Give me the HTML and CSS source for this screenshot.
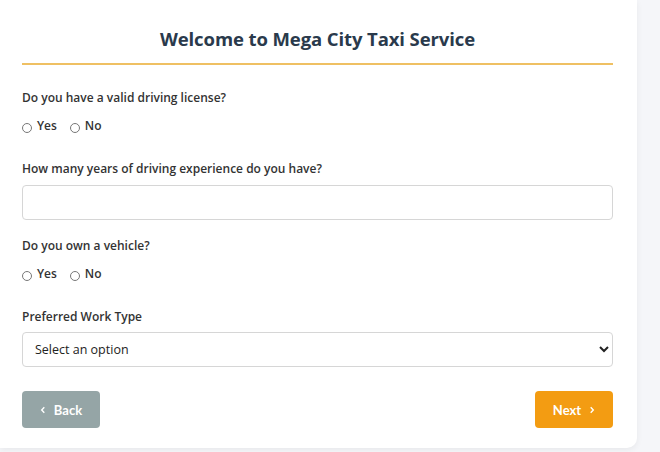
FILE: index.html
```html
<!DOCTYPE html>
<html lang="en">
<head>
<meta charset="utf-8">
<title>Mega City Taxi Service</title>
<link rel="stylesheet" href="styles.css">
</head>
<body>
<div class="card">
  <h1 class="title">Welcome to Mega City Taxi Service</h1>
  <form class="form">
    <div class="group group-radio">
      <p class="label">Do you have a valid driving license?</p>
      <div class="radios">
        <label class="opt"><input type="radio" name="license"> Yes</label>
        <label class="opt"><input type="radio" name="license"> No</label>
      </div>
    </div>
    <div class="group group-field">
      <label class="label" for="exp">How many years of driving experience do you have?</label>
      <input class="field" id="exp" type="text">
    </div>
    <div class="group group-radio">
      <p class="label">Do you own a vehicle?</p>
      <div class="radios">
        <label class="opt"><input type="radio" name="vehicle"> Yes</label>
        <label class="opt"><input type="radio" name="vehicle"> No</label>
      </div>
    </div>
    <div class="group group-select">
      <label class="label" for="work">Preferred Work Type</label>
      <select class="field select" id="work">
        <option>Select an option</option>
      </select>
    </div>
    <div class="actions">
      <button type="button" class="btn btn-back">
        <svg class="chev" width="6" height="8" viewBox="0 0 6 8"><path d="M4.3 1.2 L1.7 4 L4.3 6.8" fill="none" stroke="#fff" stroke-width="1.4"/></svg>
        <span>Back</span>
      </button>
      <button type="button" class="btn btn-next">
        <span>Next</span>
        <svg class="chev" width="6" height="8" viewBox="0 0 6 8"><path d="M1.7 1.2 L4.3 4 L1.7 6.8" fill="none" stroke="#fff" stroke-width="1.4"/></svg>
      </button>
    </div>
  </form>
</div>
</body>
</html>
```
FILE: styles.css
```css
* { box-sizing: border-box; }
html, body { margin: 0; padding: 0; }
body {
  background: #f5f6f9;
  font-family: "Open Sans", "Noto Sans", sans-serif;
  height: 452px;
  overflow: hidden;
}
.card {
  width: 637px;
  background: #fff;
  border-radius: 0 0 10px 0;
  box-shadow: 0 2px 6px rgba(0,0,0,0.06);
  padding: 26px 24px 20px 22px;
}
.title {
  margin: 0;
  text-align: center;
  font-size: 18.5px;
  line-height: 26px;
  font-weight: 700;
  color: #2a3a4c;
  padding-bottom: 11px;
  border-bottom: 2px solid #efc063;
  letter-spacing: -0.1px;
}
.form { padding-top: 23px; }
.label {
  display: block;
  margin: 0;
  font-size: 12px;
  line-height: 20px;
  font-weight: 600;
  color: #333;
}
.group-radio { margin-bottom: 23px; }
.group-field { margin-bottom: 16px; }
.group-select { margin-bottom: 24px; }
.radios {
  margin-top: 8px;
  display: flex;
  gap: 13px;
  height: 20px;
  align-items: center;
}
.opt {
  display: flex;
  align-items: center;
  font-size: 12px;
  font-weight: 600;
  color: #333;
  line-height: 20px;
}
.opt input {
  appearance: none;
  width: 10px;
  height: 10px;
  margin: 4px 5px 0 0;
  border: 1px solid #777;
  border-radius: 50%;
  background: #fff;
}
.field {
  display: block;
  width: 100%;
  height: 35px;
  margin-top: 6px;
  border: 1px solid #d6d6d6;
  border-radius: 4px;
  background: #fff;
  font-family: "Open Sans", "Noto Sans", sans-serif;
  font-size: 12.5px;
  color: #222;
  padding: 0 11px;
}
.select { margin-top: 5px; padding-left: 8px; }
.actions {
  display: flex;
  justify-content: space-between;
}
.btn {
  width: 78px;
  height: 37px;
  border: none;
  border-radius: 4px;
  color: #fff;
  font-family: Lato, "Open Sans", sans-serif;
  font-weight: 700;
  font-size: 13px;
  display: flex;
  align-items: center;
  justify-content: center;
  gap: 8px;
  padding: 0;
}
.btn-back { background: #95a5a6; }
.btn-next { background: #f39c12; }
.chev { display: block; }
```
